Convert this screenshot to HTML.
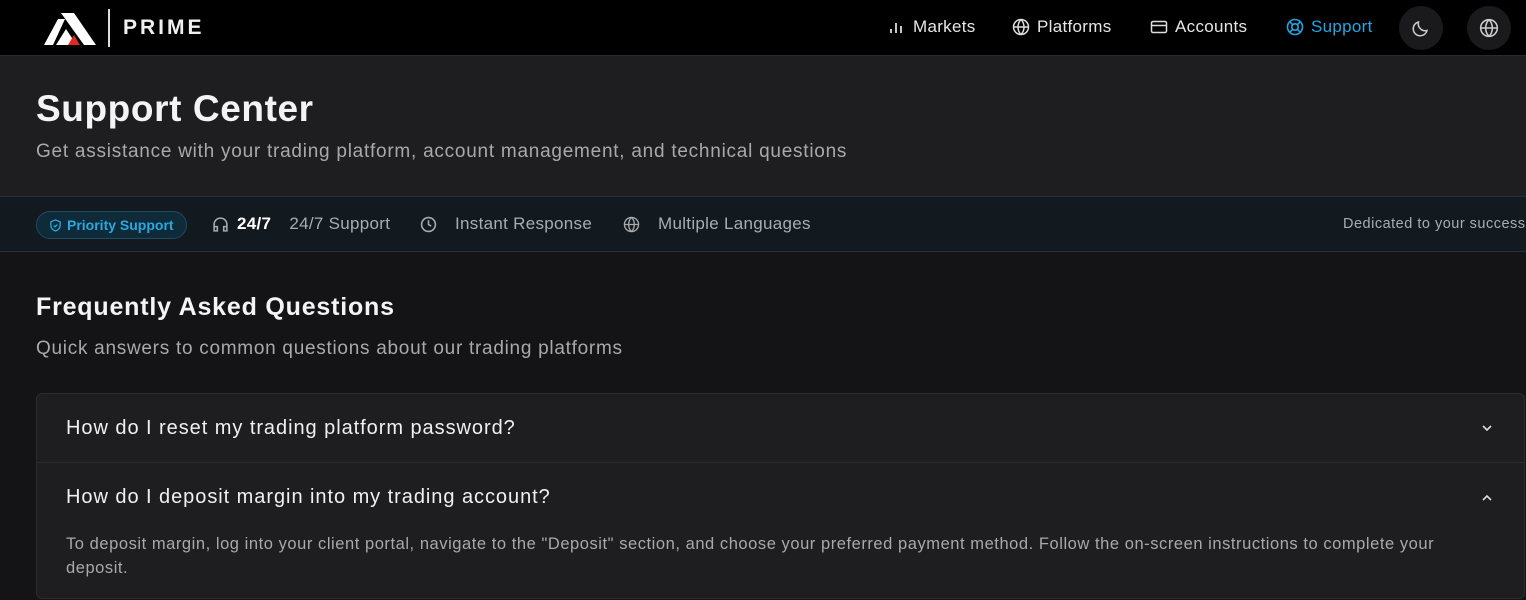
<!DOCTYPE html>
<html><head><style>
*{margin:0;padding:0;box-sizing:border-box}
html,body{width:1526px;height:600px;overflow:hidden}
body{background:#141416;font-family:"Liberation Sans",sans-serif;color:#e8e8ea}
.nav{height:56px;background:#000;position:relative;border-bottom:1px solid #2a2a2c}
.logo{position:absolute;left:44px;top:9px}
.bar{position:absolute;left:108px;top:9px;width:2px;height:38px;background:#ddd}
.prime{position:absolute;left:123px;top:16px;font-weight:bold;font-size:21px;letter-spacing:3px;color:#f0f0f0}
.ni{position:absolute;top:17px;font-size:17px;letter-spacing:0.3px;color:#e6e6e6;display:flex;align-items:center;gap:7px}
.ni svg{width:18px;height:18px}
.circ{position:absolute;top:6px;width:44px;height:44px;border-radius:50%;background:#1a1a1c;display:flex;align-items:center;justify-content:center}
.hdr{height:140px;background:#1e1e20;padding:32px 36px 0}
.hdr h1{font-size:37px;font-weight:bold;letter-spacing:0.6px;color:#f4f4f4;line-height:42px}
.hdr p{font-size:19px;letter-spacing:0.75px;color:#a8a8ad;margin-top:11px}
.band{height:56px;background:#121a20;border-top:1px solid #26303a;border-bottom:1px solid #26303a;position:relative;font-size:17px;letter-spacing:0.3px;color:#a8adb2}
.band>*{position:absolute;top:0;height:54px;display:flex;align-items:center;gap:8px}
.pill{left:36px;top:14px!important;height:28px!important;padding:0 12px;border:1px solid #1f4a60;background:#0f2a38;border-radius:14px;color:#2aa8e0;font-weight:bold;font-size:14px;gap:5px!important;letter-spacing:0}
main{padding:40px 36px 0}
main h2{font-size:25px;font-weight:bold;letter-spacing:0.8px;color:#f4f4f4;margin-top:1px}
main .sub{font-size:19px;letter-spacing:0.72px;color:#a8a8ad;margin-top:16px}
.card{margin-top:33px;width:1489px;height:206px;background:#1e1e20;border:1px solid #2c2c2e;border-radius:6px;overflow:hidden}
.q{height:69px;display:flex;align-items:center;justify-content:space-between;padding:0 30px 0 29px;font-size:20px;letter-spacing:0.95px;color:#f0f0f0;border-bottom:1px solid #2c2c2e}
.q:nth-child(2){border:none}
.a{padding:0 30px 0 29px;font-size:16.5px;letter-spacing:0.55px;color:#a8a8ad;line-height:24px;width:1470px}
</style></head><body>
<div class="nav">
<svg class="logo" width="54" height="38" viewBox="0 0 54 38"><polygon points="0,36 14,10 21,10 9,36" fill="#fff"/><polygon points="17,4 30,4 52,36 40,36" fill="#fff"/><polygon points="12,36 22,20 30,32 24,36" fill="#fff"/><polygon points="24,36 30,26 36,36" fill="#e0281e"/></svg>
<div class="bar"></div><div class="prime">PRIME</div>
<div class="ni" style="left:888px"><svg viewBox="0 0 18 18" stroke="#ddd" stroke-width="1.8"><path d="M3 15V11M8 15V5M13 15V8"/></svg>Markets</div>
<div class="ni" style="left:1012px"><svg viewBox="0 0 18 18" fill="none" stroke="#ddd" stroke-width="1.5"><circle cx="9" cy="9" r="7.5"/><path d="M1.5 9h15M9 1.5c-4 4-4 11 0 15M9 1.5c4 4 4 11 0 15"/></svg>Platforms</div>
<div class="ni" style="left:1150px"><svg viewBox="0 0 18 18" fill="none" stroke="#ddd" stroke-width="1.5"><rect x="1.5" y="3.5" width="15" height="11" rx="1.5"/><path d="M1.5 7.5h15"/></svg>Accounts</div>
<div class="ni" style="left:1286px;color:#22a6e2"><svg viewBox="0 0 18 18" fill="none" stroke="#22a6e2" stroke-width="1.6"><circle cx="9" cy="9" r="7.5"/><circle cx="9" cy="9" r="3.2"/><path d="M3.7 3.7l3 3M14.3 3.7l-3 3M3.7 14.3l3-3M14.3 14.3l-3-3"/></svg>Support</div>
<div class="circ" style="left:1399px"><svg width="20" height="20" viewBox="0 0 20 20" fill="none" stroke="#ccc" stroke-width="1.5"><path d="M16 12.5A7 7 0 0 1 7.5 4a7 7 0 1 0 8.5 8.5z"/></svg></div>
<div class="circ" style="left:1467px"><svg width="20" height="20" viewBox="0 0 18 18" fill="none" stroke="#ccc" stroke-width="1.4"><circle cx="9" cy="9" r="7.5"/><path d="M1.5 9h15M9 1.5c-4 4-4 11 0 15M9 1.5c4 4 4 11 0 15"/></svg></div>
</div>
<div class="hdr"><h1>Support Center</h1><p>Get assistance with your trading platform, account management, and technical questions</p></div>
<div class="band">
<div class="pill"><svg width="13" height="13" viewBox="0 0 14 14" fill="none" stroke="#2aa8e0" stroke-width="1.4"><path d="M7 1l5 2v4c0 3-2.5 5-5 6-2.5-1-5-3-5-6V3z"/><path d="M5 7l1.5 1.5L9 6"/></svg>Priority Support</div>
<div style="left:212px"><svg width="17" height="17" viewBox="0 0 16 16" fill="none" stroke="#aaa" stroke-width="1.5"><path d="M2 12V8a6 6 0 0 1 12 0v4M2 10h3v4H2zM11 10h3v4h-3z"/></svg><b style="color:#fff">24/7</b>&nbsp; 24/7 Support</div>
<div style="left:420px;gap:18px"><svg width="17" height="17" viewBox="0 0 16 16" fill="none" stroke="#aaa" stroke-width="1.5"><circle cx="8" cy="8" r="6.5"/><path d="M8 4v4l2.5 1.5"/></svg>Instant Response</div>
<div style="left:623px;gap:18px"><svg width="17" height="17" viewBox="0 0 18 18" fill="none" stroke="#aaa" stroke-width="1.4"><circle cx="9" cy="9" r="7.5"/><path d="M1.5 9h15M9 1.5c-4 4-4 11 0 15M9 1.5c4 4 4 11 0 15"/></svg>Multiple Languages</div>
<div style="left:1343px;font-size:14.5px;letter-spacing:0.5px;white-space:nowrap">Dedicated to your success</div>
</div>
<main><h2>Frequently Asked Questions</h2><p class="sub">Quick answers to common questions about our trading platforms</p>
<div class="card">
<div class="q">How do I reset my trading platform password?<svg width="14" height="14" viewBox="0 0 14 14" fill="none" stroke="#ddd" stroke-width="1.6"><path d="M3 5l4 4 4-4"/></svg></div>
<div class="q">How do I deposit margin into my trading account?<svg width="14" height="14" viewBox="0 0 14 14" fill="none" stroke="#ddd" stroke-width="1.6"><path d="M3 9l4-4 4 4"/></svg></div>
<div class="a">To deposit margin, log into your client portal, navigate to the "Deposit" section, and choose your preferred payment method. Follow the on-screen instructions to complete your deposit.</div>
</div></main>
</body></html>
